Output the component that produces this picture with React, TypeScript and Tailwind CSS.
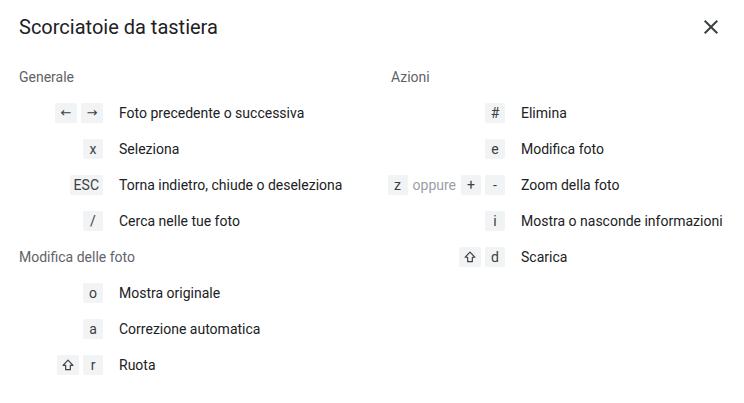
import { ReactNode } from "react";

type Shortcut = { keys: ReactNode; label: string };

function Key({ children, wide }: { children: ReactNode; wide?: boolean }) {
  return (
    <span
      className={`flex h-5 items-center justify-center rounded-[2px] bg-[#f1f3f4] px-1 text-sm text-[#3c4043] ${
        wide ? "w-[22px]" : "min-w-[20px]"
      }`}
    >
      {children}
    </span>
  );
}

function Arrow({ children }: { children: ReactNode }) {
  return <span className="font-['DejaVu_Sans',sans-serif] text-[13px]">{children}</span>;
}

function ShiftIcon() {
  return (
    <svg width="14" height="14" viewBox="0 0 24 24" fill="none" stroke="currentColor" strokeWidth="2" strokeLinejoin="round">
      <path d="M12 3.5 3.5 12.5H8v7.5h8v-7.5h4.5z" />
    </svg>
  );
}

function Section({ title, items, keyWidth }: { title: string; items: Shortcut[]; keyWidth: string }) {
  return (
    <div>
      <div className="flex h-9 items-center text-sm text-[#5f6368]">{title}</div>
      {items.map((item) => (
        <div key={item.label} className="flex h-9 items-center">
          <div className={`flex shrink-0 items-center justify-end gap-1 ${keyWidth}`}>{item.keys}</div>
          <span className="ml-4 whitespace-nowrap text-sm text-[#202124]">{item.label}</span>
        </div>
      ))}
    </div>
  );
}

const generale: Shortcut[] = [
  {
    keys: (
      <>
        <Key wide>
          <Arrow>←</Arrow>
        </Key>
        <Key wide>
          <Arrow>→</Arrow>
        </Key>
      </>
    ),
    label: "Foto precedente o successiva",
  },
  { keys: <Key>x</Key>, label: "Seleziona" },
  { keys: <Key>ESC</Key>, label: "Torna indietro, chiude o deseleziona" },
  { keys: <Key>/</Key>, label: "Cerca nelle tue foto" },
];

const modifica: Shortcut[] = [
  { keys: <Key>o</Key>, label: "Mostra originale" },
  { keys: <Key>a</Key>, label: "Correzione automatica" },
  {
    keys: (
      <>
        <Key wide>
          <ShiftIcon />
        </Key>
        <Key>r</Key>
      </>
    ),
    label: "Ruota",
  },
];

const azioni: Shortcut[] = [
  { keys: <Key>#</Key>, label: "Elimina" },
  { keys: <Key>e</Key>, label: "Modifica foto" },
  {
    keys: (
      <>
        <Key>z</Key>
        <span className="px-px text-sm text-[#9aa0a6]">oppure</span>
        <Key>+</Key>
        <Key>-</Key>
      </>
    ),
    label: "Zoom della foto",
  },
  { keys: <Key>i</Key>, label: "Mostra o nasconde informazioni" },
  {
    keys: (
      <>
        <Key>
          <ShiftIcon />
        </Key>
        <Key>d</Key>
      </>
    ),
    label: "Scarica",
  },
];

export default function App() {
  return (
    <div className="min-h-screen bg-white font-['Roboto','Liberation_Sans',sans-serif] text-[#202124]">
      {/* Dialog header */}
      <div className="flex h-[54px] items-center justify-between pl-[19px] pr-[19px]">
        <h1 className="text-[20px] font-normal text-[#202124]">Scorciatoie da tastiera</h1>
        <button className="flex h-7 w-7 items-center justify-center text-[#3c4043]" aria-label="Chiudi">
          <svg width="24" height="24" viewBox="0 0 24 24" fill="currentColor">
            <path d="M19 6.41 17.59 5 12 10.59 6.41 5 5 6.41 10.59 12 5 17.59 6.41 19 12 13.41 17.59 19 19 17.59 13.41 12z" />
          </svg>
        </button>
      </div>

      {/* Shortcut columns */}
      <div className="mt-[5px] flex pl-[19px]">
        <div className="w-[372px] shrink-0">
          <Section title="Generale" items={generale} keyWidth="w-[84px]" />
          <Section title="Modifica delle foto" items={modifica} keyWidth="w-[84px]" />
        </div>
        <div>
          <Section title="Azioni" items={azioni} keyWidth="w-[114px]" />
        </div>
      </div>
    </div>
  );
}
